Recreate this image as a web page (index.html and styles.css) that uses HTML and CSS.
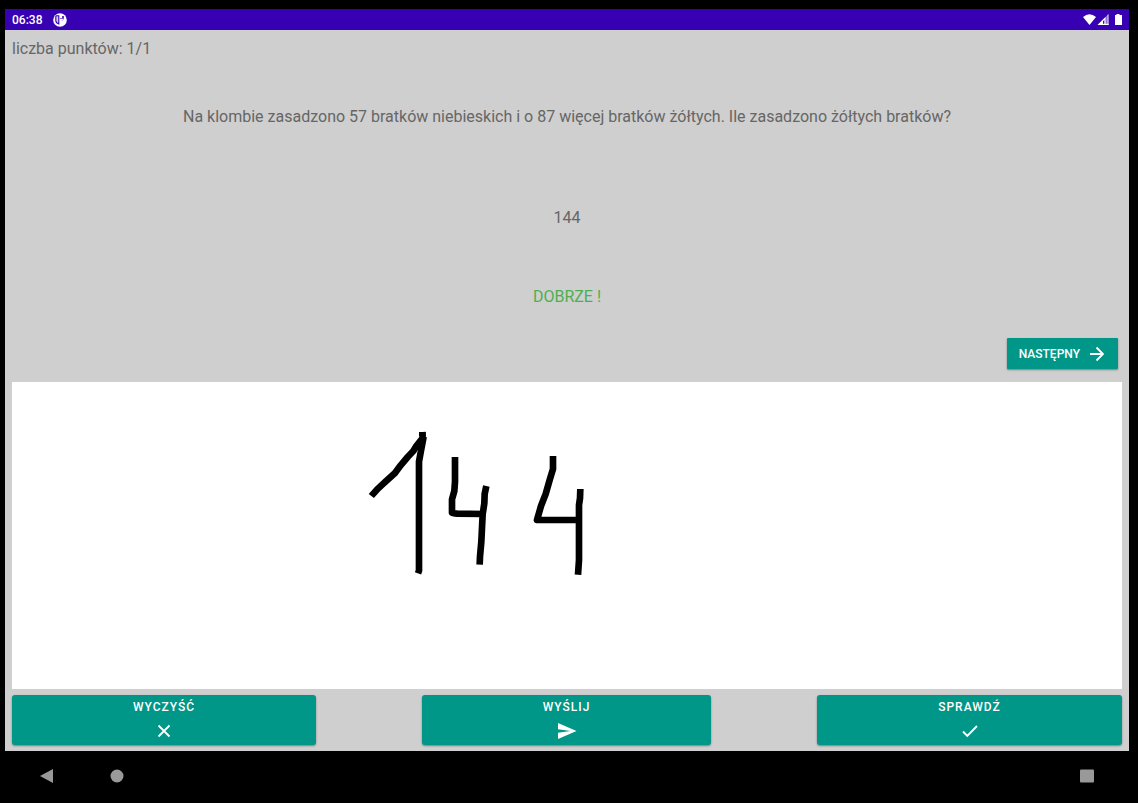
FILE: index.html
```html
<!DOCTYPE html>
<html lang="pl">
<head>
<meta charset="utf-8">
<meta name="viewport" content="width=device-width, initial-scale=1">
<title>Zadanie</title>
<link rel="stylesheet" href="styles.css">
</head>
<body>
<header class="status">
  <span class="clock">06:38</span>
  <svg class="app-badge" viewBox="0 0 14 14" width="14" height="14" aria-hidden="true">
    <circle cx="7" cy="7" r="6.800" fill="#fff"/>
    <path d="M6 2.800H3.700Q3 2.800 3 3.500V8.500Q3.300 10.500 6 11z" fill="#3700b3" fill-opacity=".2"/>
    <path d="M6.300 2.800H3.700Q2.800 2.800 2.800 3.700V7.500Q2.800 10 5.800 11V3" fill="none" stroke="#3700b3" stroke-width="1.100"/>
    <path d="M7 3h3.800v2.500Q10.600 7.800 8 8H7z" fill="#3700b3"/>
    <path d="M7 2.500h2.200v2.700H7z" fill="#fff"/>
    <path d="M7 5.800h3.800Q10 8.300 7 8.200z" fill="#fff"/>
  </svg>
  <svg class="signals" viewBox="0 0 40 12" width="40" height="12" aria-hidden="true">
    <path d="M0 3Q6.500-2.500 13 3L6.500 11z" fill="#fff"/>
    <path d="M25.500 0v11H14.500z" fill="#fff" fill-opacity=".45"/>
    <path d="M22.500 3V11H14.500z" fill="#fff"/>
    <path d="M21.300 6v3.700h-1.300V7.300z" fill="#3700b3"/>
    <path d="M24.500 1v10h1V0z" fill="#fff" fill-opacity=".7"/>
    <path d="M22 9.800h3.500V11H22z" fill="#fff"/>
    <path d="M33.500 0h3v1H39v10h-7V1h1.500z" fill="#fff"/>
  </svg>
</header>
<main class="app">
  <p class="score">liczba punktów: 1/1</p>
  <p class="question">Na klombie zasadzono 57 bratków niebieskich i o 87 więcej bratków żółtych. Ile zasadzono żółtych bratków?</p>
  <p class="answer">144</p>
  <p class="verdict">DOBRZE !</p>
  <button class="btn next" type="button">NASTĘPNY
    <svg viewBox="0 0 16 16" width="16" height="16" aria-hidden="true"><path d="M1 8h13M7.500 1.500 14 8 7.500 14.500" fill="none" stroke="#fff" stroke-width="1.800"/></svg>
  </button>
  <svg class="board" viewBox="0 0 1110 307" preserveAspectRatio="xMidYMid meet" role="img" aria-label="Pismo odręczne">
    <g transform="translate(348 38) scale(.33333)" fill="none" stroke="#000" stroke-width="20" stroke-linejoin="round">
      <path d="M34 228Q52 206 72 189L105 159L122 136L143 111L160 93L169 78L188 54L187 36"/>
      <path d="M187 36V48M191 50L183 92L177 125V430L177 452L174 460"/>
      <path d="M285 111V185L283 213L276 238V278Q278 280 292 281L369 282"/>
      <path d="M379 198L374 222L373 250L368 283L364 365L360 410L359 434"/>
      <path d="M579 108V147L569 180L557 222L543 258L531 300H658"/>
      <path d="M661 207L660 235L657 255V420L654 464"/>
    </g>
  </svg>
  <div class="actions">
    <button class="btn action" type="button">WYCZYŚĆ
      <svg viewBox="0 0 20 20" width="20" height="20" aria-hidden="true"><path d="M4.500 4.500l11 11M15.500 4.500l-11 11" stroke="#fff" stroke-width="1.800"/></svg>
    </button>
    <button class="btn action" type="button">WYŚLIJ
      <svg viewBox="0 0 20 20" width="20" height="20" aria-hidden="true"><path d="M1 2 19.500 10 1 18V11.800L13.500 10 1 8.200z" fill="#fff"/></svg>
    </button>
    <button class="btn action" type="button">SPRAWDŹ
      <svg viewBox="0 0 20 20" width="20" height="20" aria-hidden="true"><path d="M3 10.500 7.300 15 17 5" fill="none" stroke="#fff" stroke-width="1.900"/></svg>
    </button>
  </div>
</main>
<nav class="system" aria-label="System">
  <button class="key" type="button" aria-label="Wstecz"><svg viewBox="0 0 14 14" width="14" height="14"><path d="M1 7 14 0v14z" fill="#999"/></svg></button>
  <button class="key" type="button" aria-label="Ekran główny"><svg viewBox="0 0 14 14" width="14" height="14"><circle cx="7" cy="7" r="6.500" fill="#999"/></svg></button>
  <button class="key recent" type="button" aria-label="Ostatnie"><svg viewBox="0 0 14 14" width="14" height="14"><rect width="14" height="13" y=".5" rx="1" fill="#999"/></svg></button>
</nav>
</body>
</html>
```
FILE: styles.css
```css
* {
  box-sizing: border-box;
}

body {
  display: flex;
  flex-direction: column;
  min-height: 100vh;
  margin: 0;
  padding: 9px 9px 0 5px;
  background: #000;
  font-family: Roboto, "Noto Sans", sans-serif;
}

.status {
  display: flex;
  align-items: center;
  gap: 11px;
  height: 21px;
  padding: 0 6px 0 7px;
  background: #3700b3;
  color: #fff;
}

.clock {
  font-size: 12px;
  font-weight: 500;
}

.signals {
  margin-left: auto;
}

.app {
  display: flex;
  flex: 1;
  flex-direction: column;
  padding: 9px 7px 6px;
  background: #cfcfcf;
  color: #666;
  font-size: 16px;
  line-height: 20px;
}

.app p {
  margin: 0;
}

.question,
.answer,
.verdict {
  text-align: center;
}

.app .question {
  margin-top: 48px;
}

.app .answer {
  margin-top: 81px;
}

.app .verdict {
  margin-top: 59px;
  color: #4caf50;
}

.btn {
  display: flex;
  align-items: center;
  border: 0;
  background: #009688;
  color: #fff;
  font-family: inherit;
  font-size: 12px;
  font-weight: 500;
  box-shadow: 0 1px 2px rgba(0, 0, 0, 0.4);
}

.next {
  align-self: flex-end;
  gap: 9px;
  height: 31px;
  margin: 31px 4px 13px 0;
  padding: 0 13px 0 12px;
  border-radius: 1px;
}

.board {
  flex: 1;
  width: 100%;
  min-height: 0;
  background: #fff;
}

.actions {
  display: grid;
  grid-template-columns: 304fr 289fr 305fr;
  column-gap: 106px;
  margin-top: 6px;
}

.action {
  flex-direction: column;
  gap: 7px;
  height: 50px;
  padding: 5px 0 0;
  border-radius: 3px;
  line-height: 14px;
  letter-spacing: 1px;
}

.system {
  display: flex;
  align-items: center;
  gap: 57px;
  height: 52px;
  padding: 0 35px 3px 34px;
}

.key {
  display: flex;
  padding: 0;
  border: 0;
  background: none;
}

.recent {
  margin-left: auto;
}
```
